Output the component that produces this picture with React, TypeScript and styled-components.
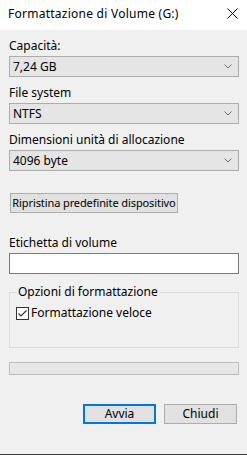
import React from "react";
import styled, { createGlobalStyle } from "styled-components";

const Global = createGlobalStyle`
  html, body { margin: 0; padding: 0; background: #ffffff; }
  body { font-family: "Noto Sans", "Open Sans", "Liberation Sans", sans-serif; font-size: 12px; color: #000; }
  * { box-sizing: border-box; }
`;

const Window = styled.div`
  width: 247px;
  height: 455px;
  display: flex;
  flex-direction: column;
  background: #ffffff;
`;

const TitleBar = styled.div`
  height: 30px;
  display: flex;
  align-items: center;
  justify-content: space-between;
  padding: 0 9px 3px 8px;
  background: #ffffff;
`;

const Title = styled.span`
  font-size: 12px;
  color: #000;
  letter-spacing: 0.25px;
`;

const Body = styled.div`
  flex: 1;
  display: flex;
  flex-direction: column;
  padding: 8px 8px 0 9px;
  background: #f0f0f0;
  border-bottom: 1px solid #3c3c3c;
`;

const Label = styled.div<{ $mt?: number }>`
  line-height: 16px;
  height: 16px;
  margin-top: ${(p) => p.$mt ?? 0}px;
  margin-bottom: 2px;
  color: #000;
  white-space: nowrap;
`;

const Combo = styled.div`
  height: 21px;
  border: 1px solid #acacac;
  background: #e5e5e5;
  display: flex;
  align-items: center;
  justify-content: space-between;
  padding: 0 6px 0 3px;
  line-height: 16px;
`;

const Button = styled.div<{ $primary?: boolean; $w?: number; $compact?: boolean }>`
  height: 20px;
  width: ${(p) => (p.$w ? `${p.$w}px` : "auto")};
  display: flex;
  align-items: center;
  justify-content: center;
  background: #e1e1e1;
  border: ${(p) => (p.$primary ? "2px solid #0078d7" : "1px solid #adadad")};
  line-height: 16px;
  white-space: nowrap;
  overflow: hidden;
  font-size: ${(p) => (p.$compact ? "11px" : "12px")};
  letter-spacing: ${(p) => (p.$compact ? "-0.1px" : "0")};
`;

const ResetRow = styled.div`
  display: flex;
  margin-top: 22px;
  padding-left: 1px;
`;

const Input = styled.div`
  height: 21px;
  border: 1px solid #7a7a7a;
  background: #ffffff;
`;

const Group = styled.fieldset`
  margin: 10px 0 0 0;
  padding: 5px 6px 0 6px;
  height: 64px;
  border: 1px solid #dcdcdc;
  border-radius: 0;
`;

const Legend = styled.legend`
  padding: 0 2px 0 1px;
  margin-left: 1px;
  line-height: 16px;
  font-size: 12px;
`;

const CheckRow = styled.label`
  display: flex;
  align-items: center;
  gap: 2px;
  line-height: 16px;
`;

const Box = styled.span`
  width: 13px;
  height: 13px;
  border: 1px solid #333333;
  background: #ffffff;
  display: flex;
  align-items: center;
  justify-content: center;
`;

const Progress = styled.div`
  height: 13px;
  margin-top: 14px;
  border: 1px solid #bcbcbc;
  background: #e6e6e6;
`;

const Footer = styled.div`
  display: flex;
  justify-content: flex-end;
  gap: 8px;
  margin-top: 29px;
  padding-right: 2px;
`;

const Chevron = () => (
  <svg width="8" height="5" viewBox="0 0 8 5">
    <path d="M0.5 0.5 L4 4 L7.5 0.5" fill="none" stroke="#707070" strokeWidth="1" />
  </svg>
);

const Close = () => (
  <svg width="11" height="11" viewBox="0 0 11 11">
    <path d="M0.5 0.5 L10.5 10.5 M10.5 0.5 L0.5 10.5" fill="none" stroke="#000" strokeWidth="1" />
  </svg>
);

const Check = () => (
  <svg width="11" height="11" viewBox="0 0 11 11">
    <path d="M1.5 5.5 L4 8 L9.5 2.5" fill="none" stroke="#333" strokeWidth="1.2" />
  </svg>
);

export default function App() {
  return (
    <>
      <Global />
      <Window>
        <TitleBar>
          <Title>Formattazione di Volume (G:)</Title>
          <Close />
        </TitleBar>
        <Body>
          <Label>Capacità:</Label>
          <Combo>
            <span>7,24 GB</span>
            <Chevron />
          </Combo>
          <Label $mt={8}>File system</Label>
          <Combo>
            <span>NTFS</span>
            <Chevron />
          </Combo>
          <Label $mt={8}>Dimensioni unità di allocazione</Label>
          <Combo>
            <span>4096 byte</span>
            <Chevron />
          </Combo>
          <ResetRow>
            <Button $w={168} $compact>Ripristina predefinite dispositivo</Button>
          </ResetRow>
          <Label $mt={22}>Etichetta di volume</Label>
          <Input />
          <Group>
            <Legend>Opzioni di formattazione</Legend>
            <CheckRow>
              <Box>
                <Check />
              </Box>
              Formattazione veloce
            </CheckRow>
          </Group>
          <Progress />
          <Footer>
            <Button $primary $w={73}>Avvia</Button>
            <Button $w={73}>Chiudi</Button>
          </Footer>
        </Body>
      </Window>
    </>
  );
}
